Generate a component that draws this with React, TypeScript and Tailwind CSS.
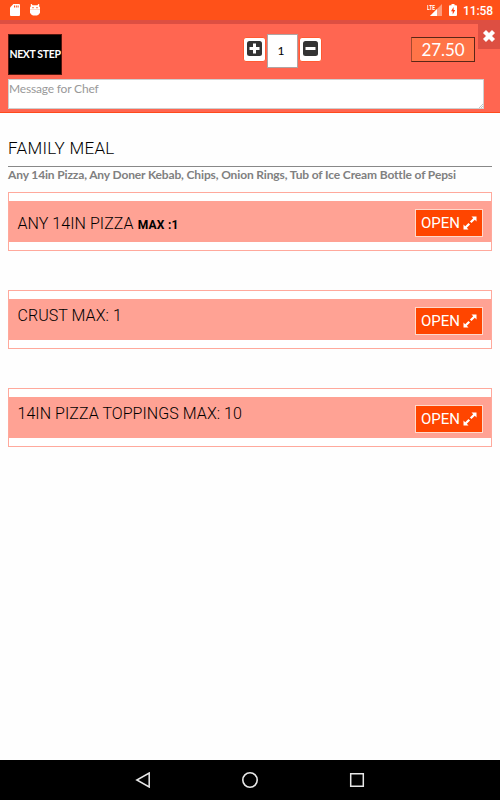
import React from "react";

interface MealSectionProps {
  title: string;
  /** Small bold limit shown after the title */
  limit?: string;
}

const sections: MealSectionProps[] = [
  { title: "ANY 14IN PIZZA", limit: "MAX :1" },
  { title: "CRUST MAX: 1" },
  { title: "14IN PIZZA TOPPINGS MAX: 10" },
];

function StatusBar() {
  return (
    <div className="flex h-5 items-center justify-between bg-[#ff5119] pl-[10px] pr-[7px] text-white">
      <div className="flex items-center gap-[10px]">
        <svg className="h-3 w-[10px]" viewBox="0 0 10 12" fill="currentColor">
          <path d="M3.4 0H9a1 1 0 0 1 1 1v10a1 1 0 0 1-1 1H1a1 1 0 0 1-1-1V3.4z" />
          <path d="M4 1.5h1v2H4zM5.8 1.5h1v2h-1zM7.6 1.5h1v2h-1z" fill="#ff5119" />
        </svg>
        <svg className="h-3 w-[10px]" viewBox="0 0 10 12" fill="currentColor">
          <path d="M.8 0h.8L2.600 1.200h4.800L8.400 0h.8v2.200L10 3.600v5.200L8.800 10.500 7 11.500H3L1.200 10.500 0 8.800V3.600l.8-1.400z" />
          <path d="M2.400 3h1.200v1.300H2.400zM6.400 3h1.200v1.300H6.400z" fill="#ff5119" />
          <path d="M0 5.500h10v.5H0z" fill="#ffb59c" />
        </svg>
      </div>
      <div className="flex items-center">
        <svg className="mr-[7px] h-3 w-[15px]" viewBox="0 0 15 12">
          <path d="M15 0v12H3z" fill="#ff9a79" />
          <path d="M10 5v7H3z" fill="#fff" />
          <text x="0" y="5.800" fontSize="6.500" fontWeight="700" textLength="8" lengthAdjust="spacingAndGlyphs" fill="#fff" fontFamily="Roboto, sans-serif">
            LTE
          </text>
        </svg>
        <svg className="mr-[6px] h-3 w-2" viewBox="0 0 8 12">
          <path d="M2.500 0h3v1.200H7a1 1 0 0 1 1 1V11a1 1 0 0 1-1 1H1a1 1 0 0 1-1-1V2.200a1 1 0 0 1 1-1h1.500z" fill="#fff" />
          <path d="M4.600 3 2 7.300h1.700V10.500L6.200 6H4.600z" fill="#ff3c10" />
        </svg>
        <span className="pt-px font-[Roboto,sans-serif] text-[12px] font-medium leading-5 tracking-[-0.1px]">11:58</span>
      </div>
    </div>
  );
}

function QuantityButton({ minus = false }: { minus?: boolean }) {
  return (
    <button className="flex h-[25px] w-[23px] items-center justify-center rounded-[3px] border border-[#ff5a32] bg-white pb-0.5">
      <svg className="h-[15px] w-[15px]" viewBox="0 0 15 15">
        <rect width="15" height="15" rx="2.500" fill="#333" />
        <path d={minus ? "M2.500 6h10v3h-10z" : "M6 2.500h3V6h3.500v3H9v3.500H6V9H2.500V6H6z"} fill="#fff" />
      </svg>
    </button>
  );
}

function OrderHeader() {
  return (
    <header className="relative h-[93px] border-b border-[#ff4a1c] border-t-4 border-t-[#dd4f42] bg-[#ff6651] px-2 pt-[10px]">
      <button className="absolute -top-px right-0 flex h-[26px] w-[22px] items-center justify-center bg-[#dd4f42] text-white">
        <svg className="h-3 w-3" viewBox="0 0 12 12" fill="currentColor">
          <path d="M3 .2 6 3.200 9 .2 11.800 3 8.800 6l3 3L9 11.800l-3-3-3 3L.2 9l3-3-3-3z" stroke="currentColor" strokeWidth=".4" strokeLinejoin="round" />
        </svg>
      </button>

      <div className="flex h-[45px] items-start">
        <button className="flex h-[41px] w-[54px] items-center justify-center whitespace-nowrap border border-[#54160e] bg-black text-[10.5px] font-bold tracking-[-0.35px] text-white">
          NEXT STEP
        </button>
        <div className="ml-[181px] flex items-start">
          <div className="pt-[3px]">
            <QuantityButton />
          </div>
          <div className="mx-px flex h-[34px] w-[31px] items-center justify-center border border-[#b0a4a2] bg-white pr-[3px] text-[12px] text-black">
            1
          </div>
          <div className="pt-[3px]">
            <QuantityButton minus />
          </div>
        </div>
        <div className="ml-auto mr-[17px] mt-[3px] h-[25px] w-[64px] border border-[#5a2617] border-l-[#a64a2d] bg-[#ff7448] text-center text-[17px] leading-[23px] tracking-[-0.1px] text-white">
          27.50
        </div>
      </div>

      <div className="relative h-[30px] w-[476px] border border-[#cfcfcf] bg-white text-[12px] leading-[17px] tracking-[-0.18px] text-[#999]">
        Message for Chef
        <svg className="absolute bottom-0 right-0 h-1 w-1" viewBox="0 0 4 4" stroke="#888" strokeWidth=".5">
          <path d="M0 4 4 0M2 4l2-2" />
        </svg>
      </div>
    </header>
  );
}

function MealSection({ title, limit }: MealSectionProps) {
  return (
    <section className="h-[59px] border border-[#ffa99c] bg-white py-[8px] font-[Roboto,sans-serif]">
      <div className="flex h-[41px] items-start justify-between bg-[#ffa294] pl-[8.5px] pr-[8px]">
        <h2 className={`whitespace-nowrap text-[16px] font-light leading-5 tracking-[0.06px] text-black ${limit ? "pt-[13px]" : "pt-[7px]"}`}>
          {title}
          {limit && <span className="ml-1 text-[12px] font-bold tracking-[0.25px]">{limit}</span>}
        </h2>
        <button className="mt-2 flex h-[28px] w-[68px] items-center justify-center gap-[3px] border border-[#ffd8ca] bg-[#ff4500] text-[15px] text-white">
          <span>OPEN</span>
          <svg className="mb-px h-[14px] w-[14px]" viewBox="0 0 14 14" fill="currentColor">
            <path d="M8.500.5h5v5l-1.700-1.700-3.300 3.300-1.600-1.600 3.300-3.300zM.5 8.500l1.700 1.700 3.300-3.300 1.600 1.600-3.300 3.300 1.700 1.700h-5z" />
          </svg>
        </button>
      </div>
    </section>
  );
}

function NavigationBar() {
  return (
    <nav className="flex h-10 items-center justify-between bg-black px-[135px] text-[#e8e8e8]">
      <svg className="h-4 w-4" viewBox="0 0 16 16" fill="none" stroke="currentColor" strokeWidth="1.500">
        <path d="M14.200 1v14L1.800 8z" />
      </svg>
      <svg className="h-4 w-4" viewBox="0 0 16 16" fill="none" stroke="currentColor" strokeWidth="1.600">
        <circle cx="8" cy="8" r="7.200" />
      </svg>
      <svg className="h-4 w-4" viewBox="0 0 16 16" fill="none" stroke="currentColor" strokeWidth="1.500">
        <path d="M1.700 1.700h12.600v12.600H1.700z" />
      </svg>
    </nav>
  );
}

export default function App() {
  return (
    <div className="flex h-[800px] w-[500px] flex-col overflow-hidden bg-[#fefefe] font-[Lato,sans-serif]">
      <StatusBar />
      <OrderHeader />

      <main className="flex-1 px-2 pt-[23px]">
        <h1 className="h-[31px] border-b border-[#888] font-[Roboto,sans-serif] text-[17px] font-light leading-[25px] tracking-[0.3px] text-black">
          FAMILY MEAL
        </h1>
        <p className="whitespace-nowrap text-[12px] font-bold leading-4 tracking-[-0.14px] text-[#808080]">
          Any 14in Pizza, Any Doner Kebab, Chips, Onion Rings, Tub of Ice Cream Bottle of Pepsi
        </p>
        <div className="mt-[9px] flex flex-col gap-[39px]">
          {sections.map((section) => (
            <MealSection key={section.title} {...section} />
          ))}
        </div>
      </main>

      <NavigationBar />
    </div>
  );
}
